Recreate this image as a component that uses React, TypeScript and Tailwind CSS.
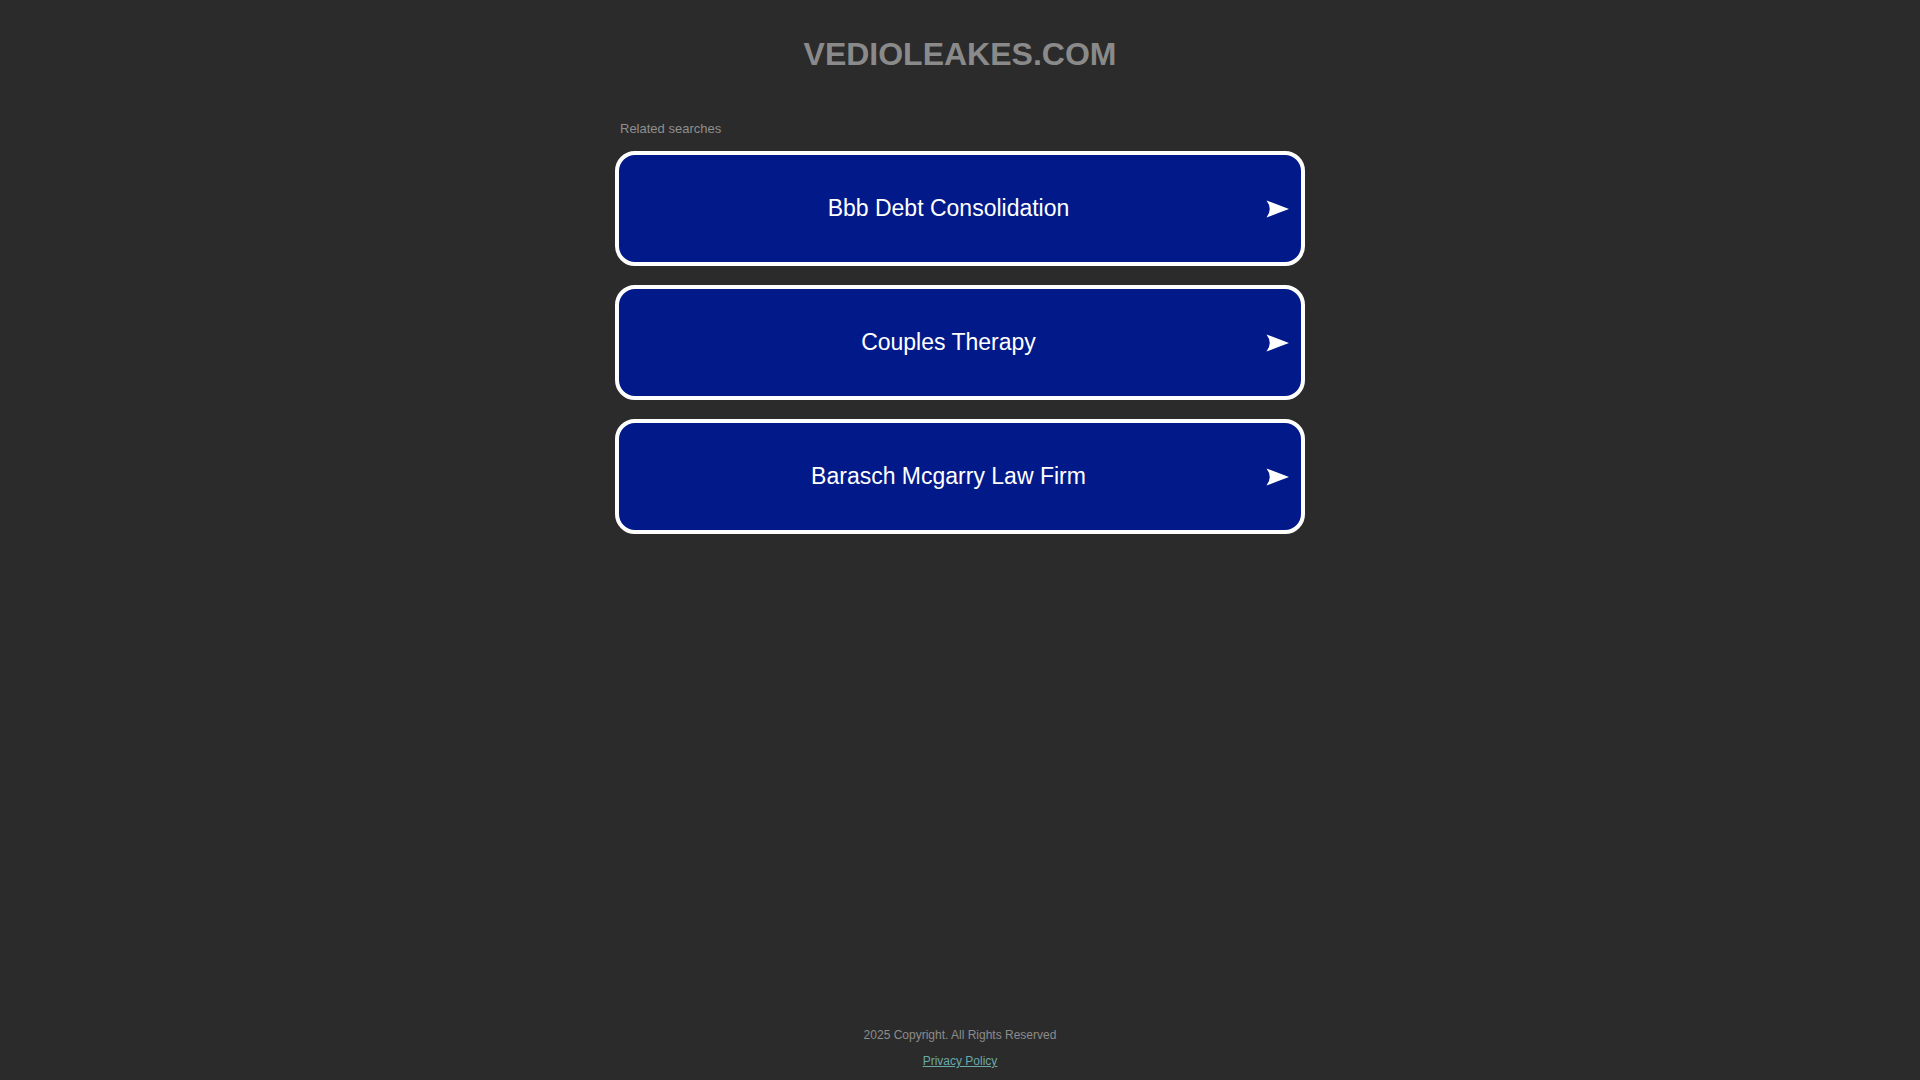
import React from "react";

const searches = ["Bbb Debt Consolidation", "Couples Therapy", "Barasch Mcgarry Law Firm"];

const Arrow = () => (
  <svg width="23" height="18" viewBox="0 0 23 18" className="block">
    <path d="M0.5 0.5 Q11 4.5 23 9 Q11 13.5 0.5 17.5 Q7 9 0.5 0.5 Z" fill="#ffffff" />
  </svg>
);

const App = () => {
  return (
    <div
      className="min-h-screen flex flex-col bg-[#2b2b2b]"
      style={{ fontFamily: '"Liberation Sans", Arial, sans-serif' }}
    >
      <header className="pt-[36px] text-center">
        <h1 className="text-[32px] leading-[36px] font-bold text-[#8a8a8a]">VEDIOLEAKES.COM</h1>
      </header>

      <main className="w-[690px] mx-auto mt-[49px]">
        <p className="pl-[5px] text-[13px] leading-[15px] text-[#8f8f8f]">Related searches</p>
        <div className="mt-[15px] flex flex-col gap-[19px]">
          {searches.map((s) => (
            <a
              key={s}
              href="#"
              className="h-[115px] grid grid-cols-[1fr_auto] items-center pl-[12px] pr-[12px] bg-[#021a89] border-4 border-white rounded-[20px]"
            >
              <span className="text-center text-[23px] text-white">{s}</span>
              <Arrow />
            </a>
          ))}
        </div>
      </main>

      <footer className="mt-auto pb-[12px] text-center text-[12px] leading-[14px]">
        <p className="text-[#8c8c8c]">2025 Copyright. All Rights Reserved</p>
        <a href="#" className="inline-block mt-[12px] text-[#6aa9a9] underline">
          Privacy Policy
        </a>
      </footer>
    </div>
  );
};

export default App;
